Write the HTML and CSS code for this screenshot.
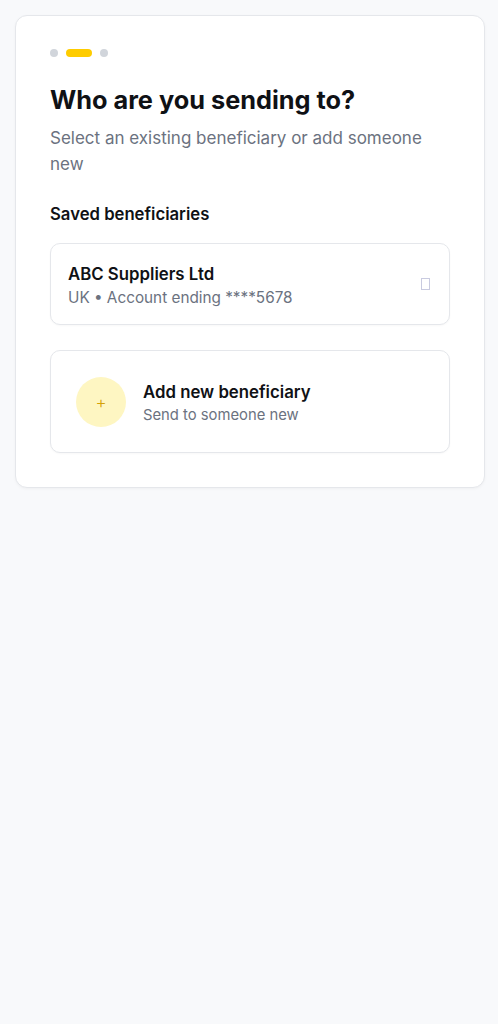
FILE: index.html
```html
<!DOCTYPE html>
<html lang="en">
<head>
<meta charset="utf-8">
<title>Who are you sending to?</title>
<link rel="stylesheet" href="styles.css">
</head>
<body>
<main class="page">
  <section class="panel">
    <div class="steps">
      <span class="step"></span>
      <span class="step step-active"></span>
      <span class="step"></span>
    </div>
    <h1 class="title">Who are you sending to?</h1>
    <p class="subtitle">Select an existing beneficiary or add someone new</p>
    <h2 class="section-label">Saved beneficiaries</h2>
    <button class="option beneficiary" type="button">
      <span class="option-text">
        <span class="option-name">ABC Suppliers Ltd</span>
        <span class="option-meta">UK • Account ending ****5678</span>
      </span>
      <span class="chevron" aria-hidden="true"></span>
    </button>
    <button class="option add-new" type="button">
      <span class="add-icon">+</span>
      <span class="option-text">
        <span class="option-name">Add new beneficiary</span>
        <span class="option-meta small">Send to someone new</span>
      </span>
    </button>
  </section>
</main>
</body>
</html>
```
FILE: styles.css
```css
* { box-sizing: border-box; }
html, body { margin: 0; padding: 0; }
body {
  background: #f8f9fb;
  font-family: Inter, "Noto Sans", sans-serif;
  color: #0f1115;
}
.page { padding: 15px 13px 15px 15px; }
.panel {
  background: #ffffff;
  border: 1px solid #e5e7eb;
  border-radius: 12px;
  padding: 33px 34px 34px;
  display: flex;
  flex-direction: column;
  box-shadow: 0 1px 3px rgba(0,0,0,0.04);
}
.steps { display: flex; gap: 8px; align-items: center; height: 8px; }
.step { width: 8px; height: 8px; border-radius: 4px; background: #d1d5db; }
.step-active { width: 26px; background: #fecc00; }
.title {
  margin: 26px 0 0;
  font-size: 25.3px;
  line-height: 34px;
  font-weight: 700;
}
.subtitle {
  margin: 8px 0 0;
  font-size: 17px;
  line-height: 26px;
  color: #6b7280;
}
.section-label {
  margin: 25px 0 0;
  font-size: 16.7px;
  line-height: 24px;
  font-weight: 600;
}
.option {
  font: inherit;
  color: inherit;
  text-align: left;
  background: #fff;
  border: 1px solid #e5e7eb;
  border-radius: 10px;
  display: flex;
  align-items: center;
  width: 100%;
  box-shadow: 0 1px 2px rgba(0,0,0,0.03);
}
.beneficiary {
  margin-top: 17px;
  height: 82px;
  padding: 0 17px;
  justify-content: space-between;
}
.add-new {
  margin-top: 25px;
  height: 103px;
  padding: 0 25px;
  gap: 17px;
}
.option-text { display: flex; flex-direction: column; padding-top: 3px; }
.option-name { font-size: 16.8px; line-height: 23px; font-weight: 600; color: #0f1115; }
.option-meta { font-size: 15.3px; line-height: 22px; color: #6b7280; margin-top: 1px; }
.option-meta.small { font-size: 14.8px; margin-top: 0; }
.chevron {
  width: 9px;
  height: 12px;
  border: 1px solid #c9cbe0;
  margin-right: 2px;
}
.add-icon {
  width: 50px;
  height: 50px;
  border-radius: 50%;
  background: #fef6c2;
  color: #d4a106;
  display: flex;
  align-items: center;
  justify-content: center;
  font-size: 17px;
  font-weight: 300;
  flex: none;
}
```
